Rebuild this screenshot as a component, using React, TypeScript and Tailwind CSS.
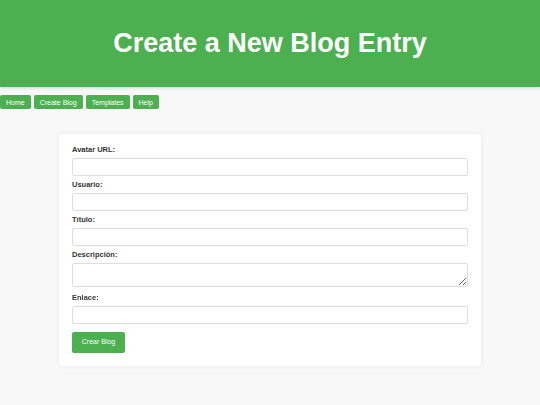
import React from "react";

const fields = [
  { label: "Avatar URL:", type: "input" },
  { label: "Usuario:", type: "input" },
  { label: "Título:", type: "input" },
  { label: "Descripción:", type: "textarea" },
  { label: "Enlace:", type: "input" },
];

const navItems = ["Home", "Create Blog", "Templates", "Help"];

export default function App() {
  return (
    <div
      className="min-h-[405px] bg-[#f8f8f8] text-[#333]"
      style={{ fontFamily: '"Liberation Sans", Arial, sans-serif' }}
    >
      {/* Cabecera */}
      <header className="h-[87px] bg-[#4caf50] flex items-center justify-center shadow-[0_1px_3px_rgba(0,0,0,0.15)]">
        <h1 className="text-white font-bold text-[27px] leading-none">Create a New Blog Entry</h1>
      </header>

      {/* Navegación */}
      <nav className="flex gap-[3px] mt-[8px]">
        {navItems.map((item) => (
          <button
            key={item}
            className="h-[14px] px-[6px] bg-[#4caf50] text-white text-[7px] leading-none rounded-[2px]"
          >
            {item}
          </button>
        ))}
      </nav>

      {/* Formulario */}
      <div className="mx-[59px] mt-[25px] bg-white rounded-[4px] shadow-[0_0_5px_rgba(0,0,0,0.07)] px-[13px] pt-[12px] pb-[13px]">
        <form className="flex flex-col" onSubmit={(e) => e.preventDefault()}>
          {fields.map((f) => (
            <div key={f.label} className="flex flex-col mb-[5px]">
              <label className="block h-[8px] text-[7.5px] font-bold text-[#333] leading-[8px] mb-[4px]">
                {f.label}
              </label>
              {f.type === "textarea" ? (
                <textarea className="block h-[24px] border border-[#ddd] rounded-[2px] bg-white mb-[2px]" />
              ) : (
                <input type="text" className="block h-[18px] border border-[#ddd] rounded-[2px] bg-white" />
              )}
            </div>
          ))}
          <button
            type="submit"
            className="mt-[3px] w-[53px] h-[21px] bg-[#4caf50] text-white text-[7px] rounded-[2px]"
          >
            Crear Blog
          </button>
        </form>
      </div>
    </div>
  );
}
